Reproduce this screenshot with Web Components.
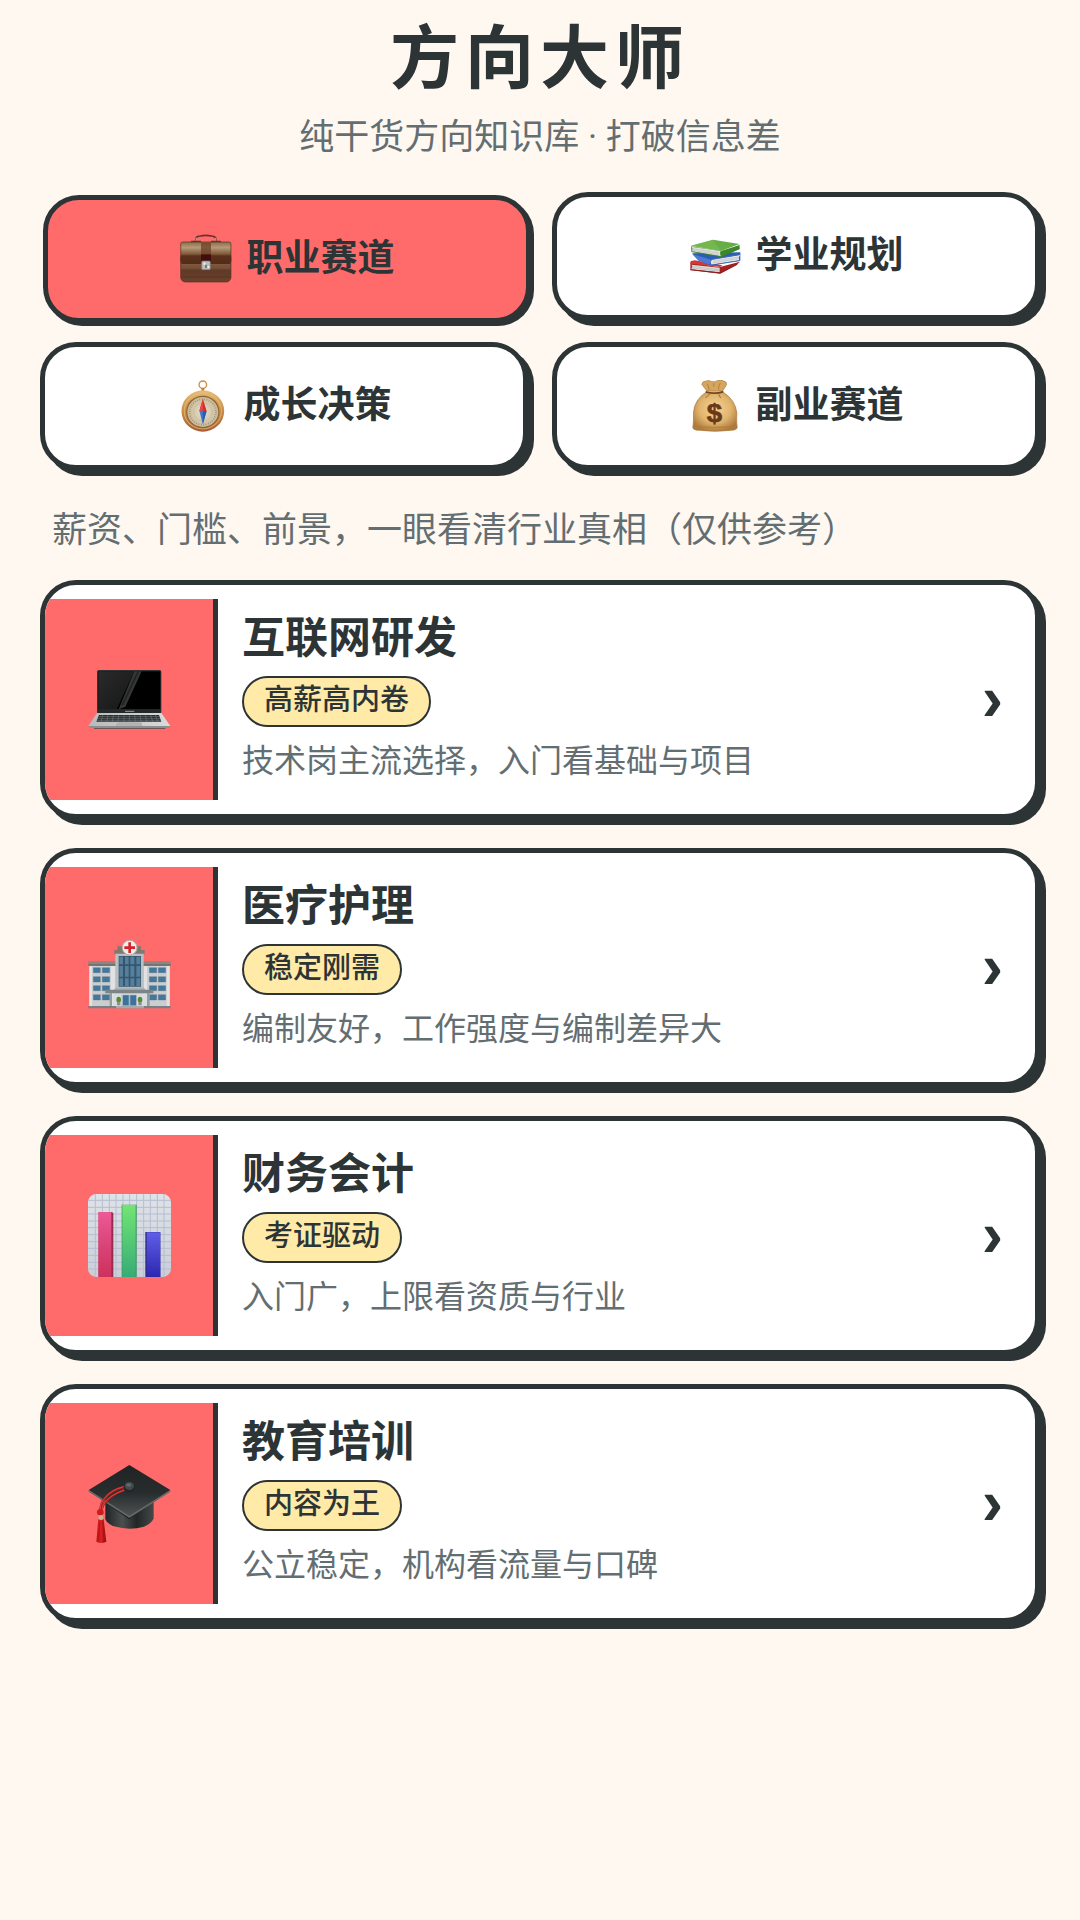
<!DOCTYPE html>
<html lang="zh-CN">
<head>
<meta charset="UTF-8">
<meta name="viewport" content="width=device-width, initial-scale=1.0">
<title>方向大师</title>
<style>
    :root {
        --bg: #fff8f0;
        --dark: #2d3436;
        --gray: #636e72;
        --primary: #ff6b6b;
        --tag: #ffeaa7;
    }

    body {
        margin: 0;
        min-height: 100vh;
        background: var(--bg);
        color: var(--dark);
        font-family: Roboto, "Noto Sans CJK SC", sans-serif;
    }
</style>
</head>
<body>
<direction-app></direction-app>

<script>
// Icon drawings, keyed by name
const ICONES = {
    briefcase: `
        <svg viewBox="468 159 151 156" preserveAspectRatio="none" aria-hidden="true">
            <defs>
                <linearGradient id="flap" x1="0" y1="0" x2="0" y2="1">
                    <stop offset="0" stop-color="#8d6b4c"/><stop offset=".25" stop-color="#b59a78"/>
                    <stop offset=".55" stop-color="#7d5739"/><stop offset=".62" stop-color="#5a301c"/><stop offset="1" stop-color="#532b1a"/>
                </linearGradient>
                <linearGradient id="case" x1="0" y1="0" x2="0" y2="1">
                    <stop offset="0" stop-color="#6e4630"/><stop offset=".5" stop-color="#7a5139"/><stop offset=".6" stop-color="#5f3a27"/><stop offset="1" stop-color="#6a412c"/>
                </linearGradient>
            </defs>
            <path d="M514 186V176Q516 168 527 168Q543 164 560 168Q571 169 573 177V186" fill="none" stroke="#6d2f2b" stroke-width="5"/>
            <path d="M515 173V184M572 173V184" stroke="#d5b6a8" stroke-width="3"/>
            <path d="M500 185H529M558 185H587" stroke="#6a3b2b" stroke-width="5"/>
            <rect x="470" y="220" width="146" height="86" rx="14" fill="url(#case)" stroke="#57301f" stroke-width="2"/>
            <path d="M470 192Q470 186 476 186H610Q616 186 616 192V242Q616 253 606 253H480Q470 253 470 242Z" fill="url(#flap)" stroke="#54301d" stroke-width="2"/>
            <path d="M529 187H558V223H529Z" fill="#6f4026" opacity=".75"/>
            <path d="M529 223H558V246H529Z" fill="#430d0d"/>
            <path d="M474 254H612" stroke="#987052" stroke-width="2"/>
            <rect x="531" y="243" width="25" height="26" rx="3" fill="#b9bdbb" stroke="#787b78" stroke-width="2"/>
            <path d="M536 248h6v6h-6zM548 258h5v6h-5z" fill="#f4f4f2"/>
            <path d="M541 254h5v10h-5z" fill="#74706c"/>
            <path d="M474 291H612" stroke="#4f2e1e" stroke-width="3" opacity=".6"/>
        </svg>`,
    books: `
        <svg viewBox="433 150 151 156" preserveAspectRatio="none" aria-hidden="true">
            <path d="M437 247L520 262L581 245L572 254L524 281L437 270Z" fill="#a52224"/>
            <path d="M438 243L450 241L530 256L523 261L437 251Z" fill="#cf3a37"/>
            <path d="M440 254L522 263V277L438 268Q446 261 440 254Z" fill="#dedede"/>
            <path d="M441 259L521 269M440 264L521 273" stroke="#aaa" stroke-width="1.500"/>
            <path d="M437 269L523 279L573 253" fill="none" stroke="#8c1f20" stroke-width="3"/>
            <path d="M442 220L582 217L582 242L499 256L490 254L460 241Z" fill="#285fb1"/>
            <path d="M442 222L498 239L493 254L462 243Z" fill="#4d78d4"/>
            <path d="M500 239L582 225Q574 234 580 241L499 254Q493 246 500 239Z" fill="#e5e6e8"/>
            <path d="M503 244L576 231M502 249L576 236" stroke="#a9acb1" stroke-width="1.500"/>
            <path d="M498 238L582 223" stroke="#3c69bd" stroke-width="3"/>
            <path d="M499 255L580 242" stroke="#2554a0" stroke-width="2"/>
            <path d="M439 199L526 213L580 195V207L526 231L440 215Z" fill="#3e862c"/>
            <path d="M439 200L525 213Q521 221 526 229L440 214Q447 206 439 200Z" fill="#e2e3e1"/>
            <path d="M443 206L521 219M443 211L521 225" stroke="#a7aaa7" stroke-width="1.500"/>
            <path d="M439 197L503 179L580 192L526 213Z" fill="#68ae48"/>
            <path d="M439 197L503 179L512 194L526 213Z" fill="#79bd52" opacity=".65"/>
            <path d="M440 215L526 230L580 206" fill="none" stroke="#3f7c2d" stroke-width="2"/>
        </svg>`,
    compass: `
        <svg viewBox="461 598 151 156" preserveAspectRatio="none" aria-hidden="true">
            <defs>
                <linearGradient id="rim" x1="0" y1="0" x2="0" y2="1">
                    <stop offset="0" stop-color="#e5bd76"/><stop offset=".5" stop-color="#c88c46"/><stop offset="1" stop-color="#a65d34"/>
                </linearGradient>
                <radialGradient id="dial"><stop offset="0" stop-color="#e8e0cb"/><stop offset="1" stop-color="#c9b995"/></radialGradient>
            </defs>
            <circle cx="536" cy="612" r="11" fill="none" stroke="#c99249" stroke-width="4"/>
            <path d="M532 622H540V633H532Z" fill="#bc8140"/>
            <circle cx="536" cy="691" r="62" fill="url(#rim)"/>
            <circle cx="536" cy="691" r="54" fill="none" stroke="#e8c17c" stroke-width="3" opacity=".7"/>
            <circle cx="536" cy="693" r="48" fill="#8e6235"/>
            <circle cx="536" cy="694" r="45" fill="url(#dial)"/>
            <circle cx="536" cy="694" r="38" fill="none" stroke="#8f8773" stroke-width="5" stroke-dasharray="2 5"/>
            <circle cx="536" cy="694" r="27" fill="none" stroke="#c5b99e" stroke-width="2"/>
            <path d="M536 654L547 691H526Z" fill="#d62c31"/>
            <path d="M536 654V691H526Z" fill="#ee4541"/>
            <path d="M526 691H547L536 731Z" fill="#3d79d5"/>
            <path d="M536 691H547L536 731Z" fill="#275cae"/>
            <circle cx="536" cy="691" r="4" fill="#8b557a"/>
        </svg>`,
    moneybag: `
        <svg viewBox="434 600 151 156" preserveAspectRatio="none" aria-hidden="true">
            <defs>
                <radialGradient id="bag" cx=".5" cy=".42" r=".6">
                    <stop offset="0" stop-color="#f6d494"/><stop offset=".6" stop-color="#e0b46d"/><stop offset="1" stop-color="#ad7b3d"/>
                </radialGradient>
            </defs>
            <path d="M486 633Q476 620 471 613Q473 603 484 603Q491 599 500 605Q509 607 516 602Q527 597 534 603Q544 604 543 614Q537 625 531 633Z" fill="#d4a65f" stroke="#ad7d3e" stroke-width="2"/>
            <path d="M487 611Q493 622 492 630M525 609Q519 617 520 629M506 610V620" fill="none" stroke="#a97336" stroke-width="3" opacity=".7"/>
            <path d="M484 636Q449 660 447 698Q448 725 445 743Q447 751 465 751Q508 757 557 751Q574 750 574 742Q571 726 573 699Q569 660 533 636Z" fill="url(#bag)" stroke="#a97638" stroke-width="2"/>
            <path d="M454 738Q508 747 566 738" fill="none" stroke="#b07b3a" stroke-width="4" opacity=".65"/>
            <path d="M482 633Q508 642 534 632L533 638Q508 646 483 638Z" fill="#714321"/>
            <path d="M520 643L526 654M494 642L482 654" stroke="#a77334" stroke-width="3"/>
            <text x="508" y="725" text-anchor="middle" font-family="Liberation Sans, sans-serif" font-size="80" font-weight="700" fill="#6b3818" stroke="#6b3818" stroke-width="2">$</text>
        </svg>`,
    laptop: `
        <svg viewBox="54 54 249 249" aria-hidden="true">
            <defs>
                <linearGradient id="base" x1="0" y1="0" x2="1" y2="0"><stop offset="0" stop-color="#b8b9ba"/><stop offset=".5" stop-color="#c9cacb"/><stop offset="1" stop-color="#dadbdc"/></linearGradient>
                <linearGradient id="glass" x1="0" y1="0" x2="1" y2="1"><stop offset="0" stop-color="#292a29"/><stop offset="1" stop-color="#151616"/></linearGradient>
            </defs>
            <rect x="81" y="90" width="193" height="130" rx="5" fill="#303333"/>
            <rect x="85" y="94" width="186" height="114" fill="#000"/>
            <path d="M85 94H193L140 208H85Z" fill="url(#glass)"/>
            <path d="M193 94H215L166 200L146 208Z" fill="#343736"/>
            <path d="M202 94H208L160 196H154Z" fill="#232525"/>
            <path d="M83 208H273V220H83Z" fill="#252828"/>
            <path d="M165 214H193" stroke="#999" stroke-width="3"/>
            <path d="M81 219H274L301 258H55Z" fill="url(#base)"/>
            <path d="M87 225H267L274 245H79Z" fill="#292d2e"/>
            <path d="M87 230H269M84 236H272M81 241H274" stroke="#aeb2b3" stroke-width="1"/>
            <path d="M98 225L93 245M114 225L110 245M130 225L127 245M146 225L144 245M162 225V245M178 225V245M194 225L196 245M210 225L213 245M226 225L230 245M242 225L248 245M256 225L263 245" stroke="#9da1a2" stroke-width="1"/>
            <path d="M143 248H213L217 261H137Z" fill="#b1b3b4" stroke="#969999" stroke-width="1"/>
            <path d="M55 258H301L297 264H59Z" fill="#8c8f90"/>
            <path d="M72 264H286V267H72Z" fill="#755154"/>
        </svg>`,
    hospital: `
        <svg viewBox="54 17 249 249" aria-hidden="true">
            <path d="M58 133H140V259H58ZM219 133H299V259H219Z" fill="#cbcdd0"/>
            <path d="M58 133H66V259H58ZM122 133H136V259H122ZM222 133H231V259H222ZM290 133H299V259H290Z" fill="#e2e2e3"/>
            <path d="M55 123H139V136H55ZM219 123H302V136H219Z" fill="#8f857d"/>
            <path d="M55 132H139V136H55ZM219 132H302V136H219Z" fill="#686d70"/>
            <path d="M133 89H224V102H133ZM142 78H213V90H142Z" fill="#82796e"/>
            <path d="M136 100H221V226H136Z" fill="#b9c0c4"/>
            <path d="M146 107H213V199H146Z" fill="#35566d"/>
            <path d="M148 109H159V132H148ZM165 109H176V132H165ZM181 109H193V132H181ZM199 109H211V132H199ZM148 137H159V169H148ZM165 137H176V169H165ZM181 137H193V169H181ZM199 137H211V169H199ZM148 174H159V197H148ZM165 174H176V197H165ZM181 174H193V197H181ZM199 174H211V197H199Z" fill="#557f9d"/>
            <path d="M70 142H91V157H70ZM97 142H119V157H97ZM70 169H91V185H70ZM97 169H119V185H97ZM70 196H91V211H70ZM97 196H119V211H97ZM70 223H91V239H70ZM97 223H119V239H97ZM238 142H260V157H238ZM265 142H287V157H265ZM238 169H260V185H238ZM265 169H287V185H265ZM238 196H260V211H238ZM265 196H287V211H265ZM238 223H260V239H238ZM265 223H287V239H265Z" fill="#41799d" stroke="#5d6b75" stroke-width="1"/>
            <path d="M129 219H231V257H129Z" fill="#dadde0"/>
            <path d="M137 202H222L227 209H131Z" fill="#a8b1b6"/>
            <path d="M106 208H250V219H106Z" fill="#7b8588"/>
            <path d="M119 218H126V257H119ZM231 218H239V257H231Z" fill="#969da0"/>
            <path d="M155 223H201V257H155Z" fill="#abb4ba"/>
            <path d="M159 225H176V255H159ZM181 225H198V255H181Z" fill="#38749d"/>
            <ellipse cx="146" cy="238" rx="7" ry="9" fill="#568b36"/>
            <ellipse cx="210" cy="238" rx="7" ry="9" fill="#568b36"/>
            <path d="M141 246h10v9h-10zM205 246h10v9h-10z" fill="#8a8e8c"/>
            <path d="M55 257H302V264H55Z" fill="#788083"/>
            <path d="M138 257H222V264H138Z" fill="#a5a9aa"/>
            <circle cx="179" cy="82" r="22" fill="#eee" stroke="#b7aaa6" stroke-width="3"/>
            <path d="M175 66H183V78H195V86H183V98H175V86H163V78H175Z" fill="#d52329"/>
        </svg>`,
    chart: `
        <svg viewBox="54 40 249 249" aria-hidden="true">
            <defs>
                <linearGradient id="paper" x1="0" y1="0" x2="0" y2="1"><stop offset="0" stop-color="#dfe3e8"/><stop offset="1" stop-color="#c9ced8"/></linearGradient>
                <linearGradient id="pink" x1="0" y1="0" x2="0" y2="1"><stop offset="0" stop-color="#ed5994"/><stop offset=".5" stop-color="#d94578"/><stop offset="1" stop-color="#cf315b"/></linearGradient>
                <linearGradient id="green" x1="0" y1="0" x2="0" y2="1"><stop offset="0" stop-color="#73e574"/><stop offset="1" stop-color="#36ac76"/></linearGradient>
                <linearGradient id="blue" x1="0" y1="0" x2="0" y2="1"><stop offset="0" stop-color="#605ee8"/><stop offset="1" stop-color="#2c27b0"/></linearGradient>
                <clipPath id="sheet"><rect x="54" y="40" width="249" height="249" rx="25"/></clipPath>
            </defs>
            <g clip-path="url(#sheet)">
                <path d="M54 40H303V289H54Z" fill="url(#paper)"/>
                <path d="M76 40V289M97 40V289M118 40V289M138 40V289M159 40V289M179 40V289M200 40V289M221 40V289M241 40V289M262 40V289M282 40V289M54 59H303M54 80H303M54 100H303M54 121H303M54 141H303M54 162H303M54 183H303M54 203H303M54 224H303M54 245H303M54 265H303" stroke="#b6bdd0" stroke-width="3"/>
                <path d="M86 94H126L130 98V289H86Z" fill="#982b50"/>
                <path d="M85 94H124V289H85Z" fill="url(#pink)"/>
                <path d="M155 72H200V289H155Z" fill="#37975c"/>
                <path d="M157 73H197V289H157Z" fill="url(#green)"/>
                <path d="M226 154H271V289H226Z" fill="#2b278a"/>
                <path d="M230 155H271V289H230Z" fill="url(#blue)"/>
            </g>
        </svg>`,
    cap: `
        <svg viewBox="54 48 249 249" aria-hidden="true">
            <defs>
                <linearGradient id="board" x1="0" y1="0" x2="0" y2="1"><stop offset="0" stop-color="#202324"/><stop offset=".55" stop-color="#282d2e"/><stop offset="1" stop-color="#505455"/></linearGradient>
                <linearGradient id="skull" x1="0" y1="0" x2="1" y2="0"><stop offset="0" stop-color="#202425"/><stop offset=".35" stop-color="#4b4f50"/><stop offset=".65" stop-color="#222627"/><stop offset="1" stop-color="#444849"/></linearGradient>
                <linearGradient id="tassel" x1="0" y1="0" x2="1" y2="0"><stop offset="0" stop-color="#bd1015"/><stop offset=".45" stop-color="#dd2323"/><stop offset="1" stop-color="#940d10"/></linearGradient>
            </defs>
            <path d="M106 166H251V217Q247 231 222 242Q178 255 132 241Q110 232 106 219Z" fill="url(#skull)"/>
            <path d="M106 170L178 220L251 160V150H106Z" fill="#171b1c"/>
            <path d="M56 132L178 57L301 132L178 213Z" fill="url(#board)"/>
            <path d="M56 132L178 209L301 132V137L178 216L56 137Z" fill="#626768"/>
            <path d="M162 123Q122 132 104 158Q91 171 91 196M164 132Q122 147 107 168Q96 178 95 197" fill="none" stroke="#9d2524" stroke-width="7"/>
            <path d="M161 122Q121 132 104 157Q90 171 90 196M162 132Q124 146 106 167Q96 178 95 197" fill="none" stroke="#df4240" stroke-width="3"/>
            <ellipse cx="178" cy="124" rx="17" ry="15" fill="#202729"/>
            <ellipse cx="178" cy="120" rx="14" ry="12" fill="#434a4d"/>
            <ellipse cx="176" cy="117" rx="8" ry="5" fill="#606669"/>
            <circle cx="91" cy="199" r="10" fill="#cd1c20"/>
            <path d="M86 208H99V222H86Z" fill="#c7b393"/>
            <path d="M85 219Q93 225 101 219L109 287Q94 295 79 287Z" fill="url(#tassel)"/>
            <path d="M90 228L86 286M98 227L102 287" stroke="#a80f15" stroke-width="2"/>
        </svg>`
};

const CATEGORIAS = [
    { icon: 'briefcase', nome: '职业赛道', ativo: true },
    { icon: 'books', nome: '学业规划' },
    { icon: 'compass', nome: '成长决策' },
    { icon: 'moneybag', nome: '副业赛道' }
];

const CARREIRAS = [
    { icon: 'laptop', titulo: '互联网研发', tag: '高薪高内卷', desc: '技术岗主流选择，入门看基础与项目' },
    { icon: 'hospital', titulo: '医疗护理', tag: '稳定刚需', desc: '编制友好，工作强度与编制差异大' },
    { icon: 'chart', titulo: '财务会计', tag: '考证驱动', desc: '入门广，上限看资质与行业' },
    { icon: 'cap', titulo: '教育培训', tag: '内容为王', desc: '公立稳定，机构看流量与口碑' }
];

class AppIcon extends HTMLElement {
    constructor() {
        super();
        this.attachShadow({ mode: 'open' });
    }

    connectedCallback() {
        this.shadowRoot.innerHTML = `
            <style>
                :host {
                    display: block;
                    flex: none;
                    width: 52px;
                    height: 52px;
                }

                svg {
                    display: block;
                    width: 100%;
                    height: 100%;
                }
            </style>
            ${ICONES[this.getAttribute('name')]}
        `;
    }
}

class AppHeader extends HTMLElement {
    constructor() {
        super();
        this.attachShadow({ mode: 'open' });
        this.shadowRoot.innerHTML = `
            <style>
                :host {
                    display: block;
                    text-align: center;
                }

                h1 {
                    margin: 0;
                    font-size: 69px;
                    line-height: 84px;
                    font-weight: 700;
                    letter-spacing: 6px;
                }

                p {
                    margin: 11px 0 0;
                    font-size: 35px;
                    line-height: 50px;
                    color: var(--gray);
                }
            </style>
            <h1><slot></slot></h1>
            <p><slot name="subtitle"></slot></p>
        `;
    }
}

class CategoryTab extends HTMLElement {
    constructor() {
        super();
        this.attachShadow({ mode: 'open' });
    }

    connectedCallback() {
        this.render();
        this.setupListeners();
    }

    render() {
        this.shadowRoot.innerHTML = `
            <style>
                :host {
                    display: block;
                }

                button {
                    display: flex;
                    align-items: center;
                    justify-content: center;
                    gap: 15px;
                    box-sizing: border-box;
                    width: 100%;
                    padding: 32px 16px;
                    border: 5px solid var(--dark);
                    border-radius: 36px;
                    background: white;
                    box-shadow: 6px 6px 0 var(--dark);
                    color: inherit;
                    font: inherit;
                    font-size: 37px;
                    line-height: 54px;
                    font-weight: 700;
                    cursor: pointer;
                }

                :host([active]) button {
                    background: var(--primary);
                    box-shadow: 3px 3px 0 var(--dark);
                    transform: translate(3px, 3px);
                }
            </style>
            <button type="button">
                <app-icon name="${this.getAttribute('icon')}"></app-icon>
                <slot></slot>
            </button>
        `;
    }

    setupListeners() {
        this.shadowRoot.querySelector('button').addEventListener('click', () => {
            this.dispatchEvent(new CustomEvent('selecionar', {
                bubbles: true,
                composed: true
            }));
        });
    }
}

class CareerCard extends HTMLElement {
    constructor() {
        super();
        this.attachShadow({ mode: 'open' });
    }

    connectedCallback() {
        this.shadowRoot.innerHTML = `
            <style>
                :host {
                    display: block;
                }

                .card {
                    display: flex;
                    align-items: stretch;
                    box-sizing: border-box;
                    width: 100%;
                    padding: 14px 0;
                    border: 5px solid var(--dark);
                    border-radius: 36px;
                    background: white;
                    box-shadow: 6px 6px 0 var(--dark);
                    overflow: hidden;
                    color: inherit;
                    font: inherit;
                    text-align: left;
                    cursor: pointer;
                }

                .card-icon {
                    display: flex;
                    align-items: center;
                    justify-content: center;
                    flex: none;
                    width: 168px;
                    background: var(--primary);
                    border-right: 5px solid var(--dark);
                }

                app-icon {
                    width: 83px;
                    height: 83px;
                }

                .card-body {
                    display: flex;
                    flex-direction: column;
                    align-items: flex-start;
                    flex: 1;
                    padding: 14px 0 16px 24px;
                }

                .titulo {
                    font-size: 43px;
                    line-height: 50px;
                    font-weight: 700;
                }

                .tag {
                    margin: 13px 0 11px;
                    padding: 0 20px 3px;
                    border: 2px solid var(--dark);
                    border-radius: 26px;
                    background: var(--tag);
                    font-size: 29px;
                    line-height: 44px;
                    font-weight: 500;
                }

                .desc {
                    font-size: 32px;
                    line-height: 46px;
                    color: var(--gray);
                }

                .seta {
                    align-self: center;
                    padding: 0 32px 3px 0;
                    font-family: "Liberation Sans", sans-serif;
                    font-size: 64px;
                    line-height: 60px;
                    font-weight: 700;
                }
            </style>
            <button class="card" type="button">
                <span class="card-icon"><app-icon name="${this.getAttribute('icon')}"></app-icon></span>
                <span class="card-body">
                    <span class="titulo"><slot name="titulo"></slot></span>
                    <span class="tag"><slot name="tag"></slot></span>
                    <span class="desc"><slot></slot></span>
                </span>
                <span class="seta">›</span>
            </button>
        `;
    }
}

class DirectionApp extends HTMLElement {
    constructor() {
        super();
        this.attachShadow({ mode: 'open' });
    }

    connectedCallback() {
        this.render();
        this.setupListeners();
    }

    render() {
        this.shadowRoot.innerHTML = `
            <style>
                :host {
                    display: block;
                    padding: 18px 40px 40px;
                }

                .tabs {
                    display: grid;
                    grid-template-columns: 1fr 1fr;
                    gap: 22px 24px;
                    margin-top: 29px;
                }

                .hint {
                    margin: 36px 12px 24px;
                    font-size: 35px;
                    line-height: 50px;
                    color: var(--gray);
                }

                .lista {
                    display: flex;
                    flex-direction: column;
                    gap: 29px;
                }
            </style>
            <app-header>方向大师<span slot="subtitle">纯干货方向知识库 · 打破信息差</span></app-header>
            <nav class="tabs">
                ${CATEGORIAS.map(cat => `
                    <category-tab icon="${cat.icon}" ${cat.ativo ? 'active' : ''}>${cat.nome}</category-tab>
                `).join('')}
            </nav>
            <p class="hint">薪资、门槛、前景，一眼看清行业真相（仅供参考）</p>
            <main class="lista">
                ${CARREIRAS.map(item => `
                    <career-card icon="${item.icon}">
                        <span slot="titulo">${item.titulo}</span>
                        <span slot="tag">${item.tag}</span>
                        ${item.desc}
                    </career-card>
                `).join('')}
            </main>
        `;
    }

    setupListeners() {
        const tabs = this.shadowRoot.querySelectorAll('category-tab');
        this.shadowRoot.addEventListener('selecionar', (e) => {
            tabs.forEach(tab => tab.toggleAttribute('active', tab === e.target));
        });
    }
}

customElements.define('app-icon', AppIcon);
customElements.define('app-header', AppHeader);
customElements.define('category-tab', CategoryTab);
customElements.define('career-card', CareerCard);
customElements.define('direction-app', DirectionApp);
</script>
</body>
</html>
